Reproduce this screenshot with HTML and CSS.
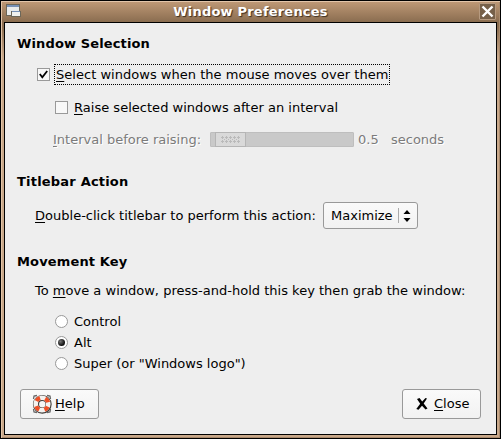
FILE: index.html
```
<!DOCTYPE html>
<html lang="en">
<head>
<meta charset="utf-8">
<title>Window Preferences</title>
<link rel="stylesheet" href="styles.css">
</head>
<body>
<div class="window">
  <header class="titlebar">
    <svg class="app-icon" width="16" height="15" viewBox="0 0 16 15">
      <rect x=".5" y=".5" width="13" height="11" fill="#e9ebeb" stroke="#6c6759"/>
      <rect x="1" y="1" width="12" height="2" fill="#7790b5"/>
      <rect x="5.5" y="7.5" width="9" height="5" fill="#f1f1ee" stroke="#6c6759"/>
      <rect x="6" y="7" width="8" height="1" fill="#7790b5"/>
    </svg>
    <h1 class="title">Window Preferences</h1>
    <button class="close-box" aria-label="Close window">
      <svg width="15" height="15" viewBox="0 0 15 15"><path d="M2.5 2.5L12.5 12.5M12.5 2.5L2.5 12.5" stroke="#fff" stroke-width="2.4"/></svg>
    </button>
  </header>
  <main class="content">
    <section class="group">
      <h2 class="h-selection">Window Selection</h2>
      <label class="row row-select"><span class="check"><svg width="11" height="11" viewBox="0 0 11 11"><path d="M1.8 5L4.3 8.2L9.2 2" fill="none" stroke="#000" stroke-width="1.8"/></svg></span><span class="label focus"><u>S</u>elect windows when the mouse moves over them</span></label>
      <label class="row row-raise"><span class="check"></span><span class="label t-raise"><u>R</u>aise selected windows after an interval</span></label>
      <div class="row row-interval"><span class="t-interval"><u>I</u>nterval before raising:</span>
        <div class="slider"><div class="thumb"><svg width="19" height="7" viewBox="0 0 19 7"><defs><pattern id="dots" width="4" height="4" patternUnits="userSpaceOnUse"><path d="M0 1.5h3M1.5 0v3M3 3.5h1" stroke="#bababa"/></pattern></defs><rect width="19" height="7" fill="url(#dots)"/></svg></div></div>
        <span class="value">0.5</span><span class="t-seconds">seconds</span></div>
    </section>
    <section class="group group-action">
      <h2 class="h-action">Titlebar Action</h2>
      <div class="row row-action"><span class="t-action"><u>D</u>ouble-click titlebar to perform this action:</span>
        <button class="combo"><span>Maximize</span><i class="sep"></i><svg width="8" height="14" viewBox="0 0 8 14"><path d="M.5 5L4 1L7.5 5ZM.5 9L4 13L7.5 9Z"/></svg></button></div>
    </section>
    <section class="group group-key">
      <h2 class="h-key">Movement Key</h2>
      <p class="hint">To <u>m</u>ove a window, press-and-hold this key then grab the window:</p>
      <div class="radios">
        <label><span class="radio"></span>Control</label>
        <label><span class="radio on"></span>Alt</label>
        <label><span class="radio"></span>Super (or "Windows logo")</label>
      </div>
    </section>
    <footer class="actions">
      <button class="btn help">
        <svg class="ring" width="20" height="20" viewBox="0 0 20 20">
          <path d="M1.5 5L2 2L5 1.5M15 1.5L18 2L18.5 5M1.5 15L2 18L5 18.5M15 18.5L18 18L18.5 15" fill="none" stroke="#666" stroke-width="1.3"/>
          <circle cx="10.3" cy="10.3" r="6.3" fill="none" stroke="#403d3a" stroke-width="6.2"/>
          <circle cx="10" cy="10" r="6.3" fill="none" stroke="#f4f2ef" stroke-width="4.6"/>
          <circle cx="10" cy="10" r="6.3" fill="none" stroke="#ee4f26" stroke-width="4.2" stroke-dasharray="4.6 5.296" transform="rotate(24 10 10)"/>
        </svg><span><u>H</u>elp</span>
      </button>
      <button class="btn close">
        <svg width="12" height="12" viewBox="0 0 12 12"><path d="M1 1L3.5 0L6.2 3.5L9.5 0L11 .6L7.7 5.5L11.5 10.5L9.5 11.5L6 7.8L2.5 11.8L.3 11L4.2 5.8Z"/></svg><span><u>C</u>lose</span>
      </button>
    </footer>
  </main>
</div>
</body>
</html>
```
FILE: styles.css
```
* { box-sizing: border-box; }
body { margin: 0; font: 13px/20px "DejaVu Sans", sans-serif; color: #000; }
h1, h2, p { margin: 0; font-size: 13px; white-space: nowrap; }
button { font: inherit; color: inherit; padding: 0; margin: 0; }
svg { display: block; flex: none; }
u { text-decoration-thickness: 1px; text-underline-offset: 2px; text-decoration-skip-ink: none; }
.window {
  width: 501px; height: 439px; padding: 0 3px 3px 2px;
  border: 1px solid #000;
  background: linear-gradient(#c09a77 0, #8a6d50 21px, #8a6d50 26px, #c8a88a 56px);
  box-shadow: inset 1px 1px #e2c5a9, inset -1px -1px #a98a6d;
}
.titlebar { height: 21px; display: flex; align-items: center; padding: 0 1px 0 3px; }
.app-icon { margin-top: -1px; }
.title { flex: 1; text-align: center; color: #fff; text-shadow: 1px 1px 1px #3d2e20; letter-spacing: .2px; }
.close-box { width: 17px; height: 17px; border: 1px solid #b69a80; background: #766049; border-radius: 1px; }
.content { height: 413px; margin: 0 0 0 1px; border: 1px solid #000; background: #eee; padding: 11px 15px 0 12px; }
.h-selection { letter-spacing: .13px; }
.h-action { letter-spacing: .2px; }
.h-key { letter-spacing: .15px; }
.row { display: flex; align-items: center; height: 20px; white-space: nowrap; }
.row-select { margin: 10px 0 0 20px; height: 21px; }
.row-raise { margin: 12px 0 0 38px; }
.row-interval { margin: 12px 0 0 36px; color: #7b7b7b; text-shadow: 1px 1px #fff; }
.row-interval > span { padding-top: 2px; }
.check { width: 13px; height: 13px; border: 1px solid #999; background: #f8f8f8; flex: none; }
.label { margin-left: 6px; }
.t-raise { padding-top: 2px; letter-spacing: .02px; }
.focus { border: 1px dotted #000; height: 21px; padding: 0 1px; margin-left: 4px; line-height: 19px; letter-spacing: .025px; }
.t-interval { width: 157px; }
.slider { width: 144px; height: 15px; background: #c9c9c9; border: 1px solid #bebebe; border-radius: 1px; padding-left: 4px; }
.thumb { width: 31px; height: 15px; margin-top: -1px; border: 1px solid #b5b5b5; background: #d9d9d9; display: grid; place-items: center; }
.value { margin-left: 4px; width: 33px; }
.group-action { margin-top: 23px; }
.row-action { margin: 10px 0 0 18px; height: 27px; }
.t-action { width: 288px; letter-spacing: .01px; }
.combo, .btn { border: 1px solid #999; border-radius: 3px; background: linear-gradient(#fafafa, #f2f2f2); display: flex; align-items: center; }
.combo { width: 95px; height: 27px; padding-left: 7px; }
.sep { width: 1px; height: 15px; background: #aaa; margin: 0 4px 0 5px; }
.group-key { margin-top: 23px; }
.hint { margin: 9px 0 0 18px; letter-spacing: .01px; }
.radios { margin: 10px 0 0 38px; }
.radios label { display: flex; align-items: center; height: 21px; }
.radio { width: 13px; height: 13px; border: 1px solid #999; border-radius: 50%; background: #fff; margin-right: 6px; display: grid; place-items: center; }
.on::after { content: ""; width: 7px; height: 7px; border-radius: 50%; background: radial-gradient(circle at 35% 35%, #777, #111 65%); }
.actions { display: flex; justify-content: space-between; margin: 15px 0 0 3px; }
.btn { width: 79px; height: 30px; }
.help { padding-left: 11px; gap: 3px; }
.ring { margin-bottom: 1px; }
.close { padding-left: 13px; gap: 6px; }
```
